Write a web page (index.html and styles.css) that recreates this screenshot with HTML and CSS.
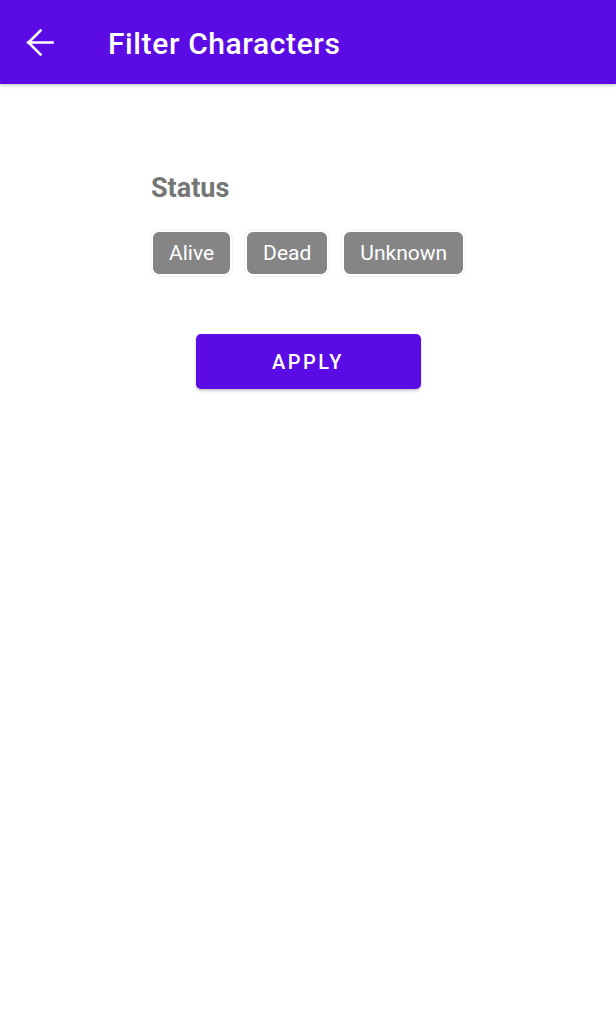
FILE: index.html
```html
<!DOCTYPE html>
<html>
<head>
<meta charset="utf-8">
<link rel="stylesheet" href="styles.css">
</head>
<body>
<header class="appbar">
  <button class="back" aria-label="Back">
    <svg width="36" height="36" viewBox="0 0 36 36"><path d="M6 18.5H30.5M18.5 6.5L6.5 18.5L18.5 30.5" fill="none" stroke="#fff" stroke-width="2.6" stroke-linecap="square"/></svg>
  </button>
  <h1 class="title">Filter Characters</h1>
</header>
<main class="content">
  <section class="filter">
    <h2 class="label">Status</h2>
    <div class="chips">
      <span class="chip">Alive</span>
      <span class="chip">Dead</span>
      <span class="chip">Unknown</span>
    </div>
  </section>
  <button class="apply">APPLY</button>
</main>
</body>
</html>
```

FILE: styles.css
```css
* { box-sizing: border-box; }
html, body { margin: 0; padding: 0; background: #fff; }
body { font-family: Roboto, "Noto Sans", sans-serif; width: 616px; height: 1028px; overflow: hidden; }
.appbar {
  height: 84px;
  background: #5b0be3;
  display: flex;
  align-items: center;
  box-shadow: 0 1px 4px rgba(0,0,0,0.25);
  position: relative;
}
.back {
  background: none; border: 0; padding: 0;
  width: 36px; height: 36px;
  margin-left: 22px; margin-top: -1px;
  display: flex;
}
.title {
  margin: 0 0 0 50px;
  color: #fff;
  font-size: 30px;
  font-weight: 500;
  letter-spacing: 0.6px;
  margin-top: 2px;
}
.content {
  display: flex;
  flex-direction: column;
  align-items: center;
  padding-top: 86px;
}
.filter { width: 316px; margin-left: 2px; }
.label {
  margin: 0;
  font-size: 27px;
  font-weight: 700;
  color: #757575;
  line-height: 36px;
}
.chips { display: flex; gap: 13px; margin-top: 24px; margin-left: 0; }
.chip {
  background: #858585;
  color: #fff;
  font-size: 21px;
  height: 46px;
  display: flex;
  align-items: center;
  padding: 0 16px;
  border-radius: 8px;
  border: 2px solid #fff;
  box-shadow: 0 0 0 1px #f2f2f2;
}
.apply {
  margin-top: 58px;
  width: 225px;
  height: 55px;
  background: #5b0be3;
  color: #fff;
  border: 0;
  border-radius: 5px;
  font-family: Roboto, sans-serif;
  font-size: 20px;
  font-weight: 500;
  letter-spacing: 2.5px;
  box-shadow: 0 2px 3px rgba(0,0,0,0.22);
}
```
